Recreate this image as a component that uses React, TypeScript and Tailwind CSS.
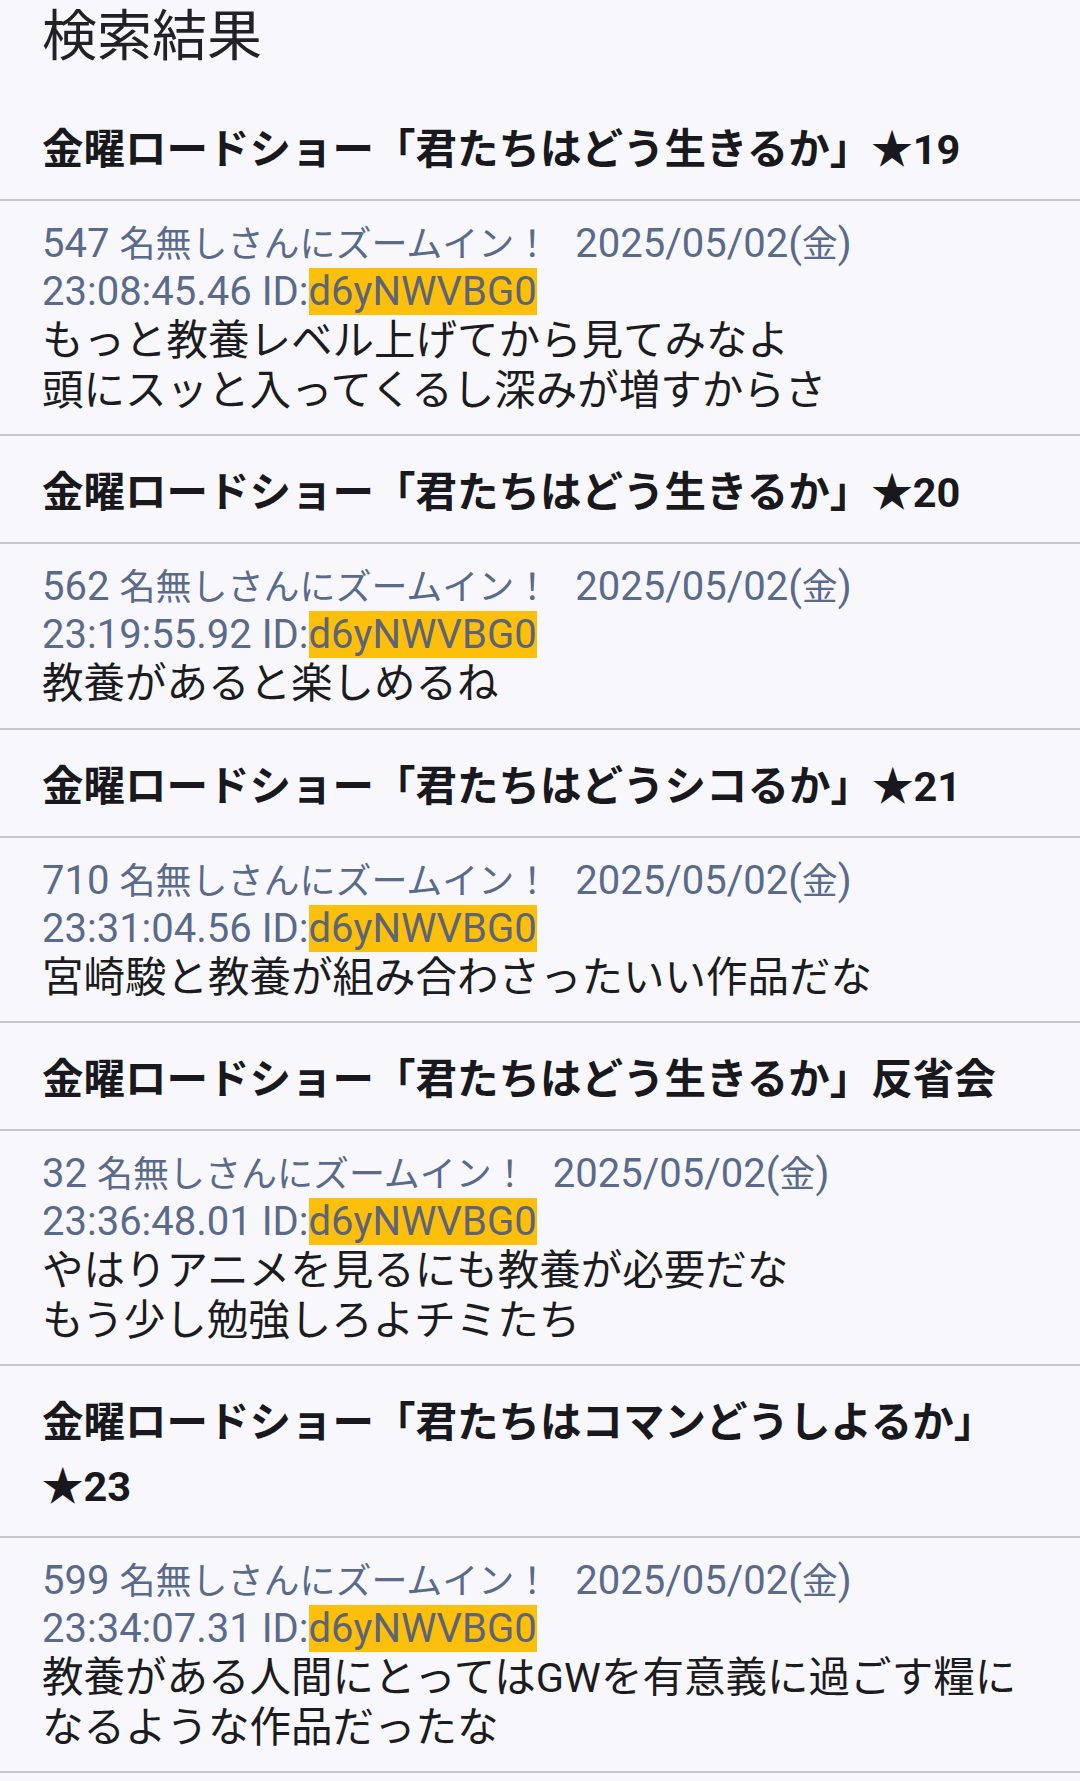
import React from "react";

type Item = {
  title: string;
  tail?: string;
  num: string;
  time: string;
  body: string[];
};

const items: Item[] = [
  {
    title: "金曜ロードショー「君たちはどう生きるか」★19",
    num: "547",
    time: "23:08:45.46",
    body: ["もっと教養レベル上げてから見てみなよ", "頭にスッと入ってくるし深みが増すからさ"],
  },
  {
    title: "金曜ロードショー「君たちはどう生きるか」★20",
    num: "562",
    time: "23:19:55.92",
    body: ["教養があると楽しめるね"],
  },
  {
    title: "金曜ロードショー「君たちはどうシコるか」★21",
    num: "710",
    time: "23:31:04.56",
    body: ["宮崎駿と教養が組み合わさったいい作品だな"],
  },
  {
    title: "金曜ロードショー「君たちはどう生きるか」反省会",
    num: "32",
    time: "23:36:48.01",
    body: ["やはりアニメを見るにも教養が必要だな", "もう少し勉強しろよチミたち"],
  },
  {
    title: "金曜ロードショー「君たちはコマンどうしよるか」",
    tail: "★23",
    num: "599",
    time: "23:34:07.31",
    body: ["教養がある人間にとってはGWを有意義に過ごす糧に", "なるような作品だったな"],
  },
];

export default function App() {
  return (
    <div
      className="min-h-screen bg-[#f8f8fc] text-[#1c1c20]"
      style={{ fontFamily: 'Roboto, "Noto Sans CJK JP", sans-serif' }}
    >
      <h1 className="px-[42px] pt-[4px] pb-[25px] text-[55px] leading-[64px] font-normal text-[#222226]">
        検索結果
      </h1>
      {items.map((it, i) => (
        <div key={i}>
          <div className="px-[42px] pt-[25px] pb-[17px] text-[41.5px] leading-[64px] font-bold text-[#19191d] border-b-2 border-[#c8c8cc]">
            {it.title}
            {it.tail && <span className="whitespace-nowrap">{it.tail}</span>}
          </div>
          <div className="px-[42px] py-[19px] border-b-2 border-[#c8c8cc]">
            <div className="text-[40px] leading-[48px] text-[#5a6a8b]">
              <div className="h-[48px] whitespace-nowrap">
                {it.num} <span className="text-[36px] leading-none">名無しさんにズームイン！</span>
                <span className="ml-[25px]">
                  2025/05/02(<span className="text-[36px] leading-none">金</span>)
                </span>
              </div>
              <div className="h-[48px] whitespace-nowrap">
                {it.time} ID:<span className="bg-[#fcbf0c] text-[#5d6478]">d6yNWVBG0</span>
              </div>
            </div>
            <div className="text-[41.5px] leading-[49.5px] text-[#1c1c20]">
              {it.body.map((l, j) => (
                <div key={j} className="whitespace-nowrap">
                  {l}
                </div>
              ))}
            </div>
          </div>
        </div>
      ))}
    </div>
  );
}
